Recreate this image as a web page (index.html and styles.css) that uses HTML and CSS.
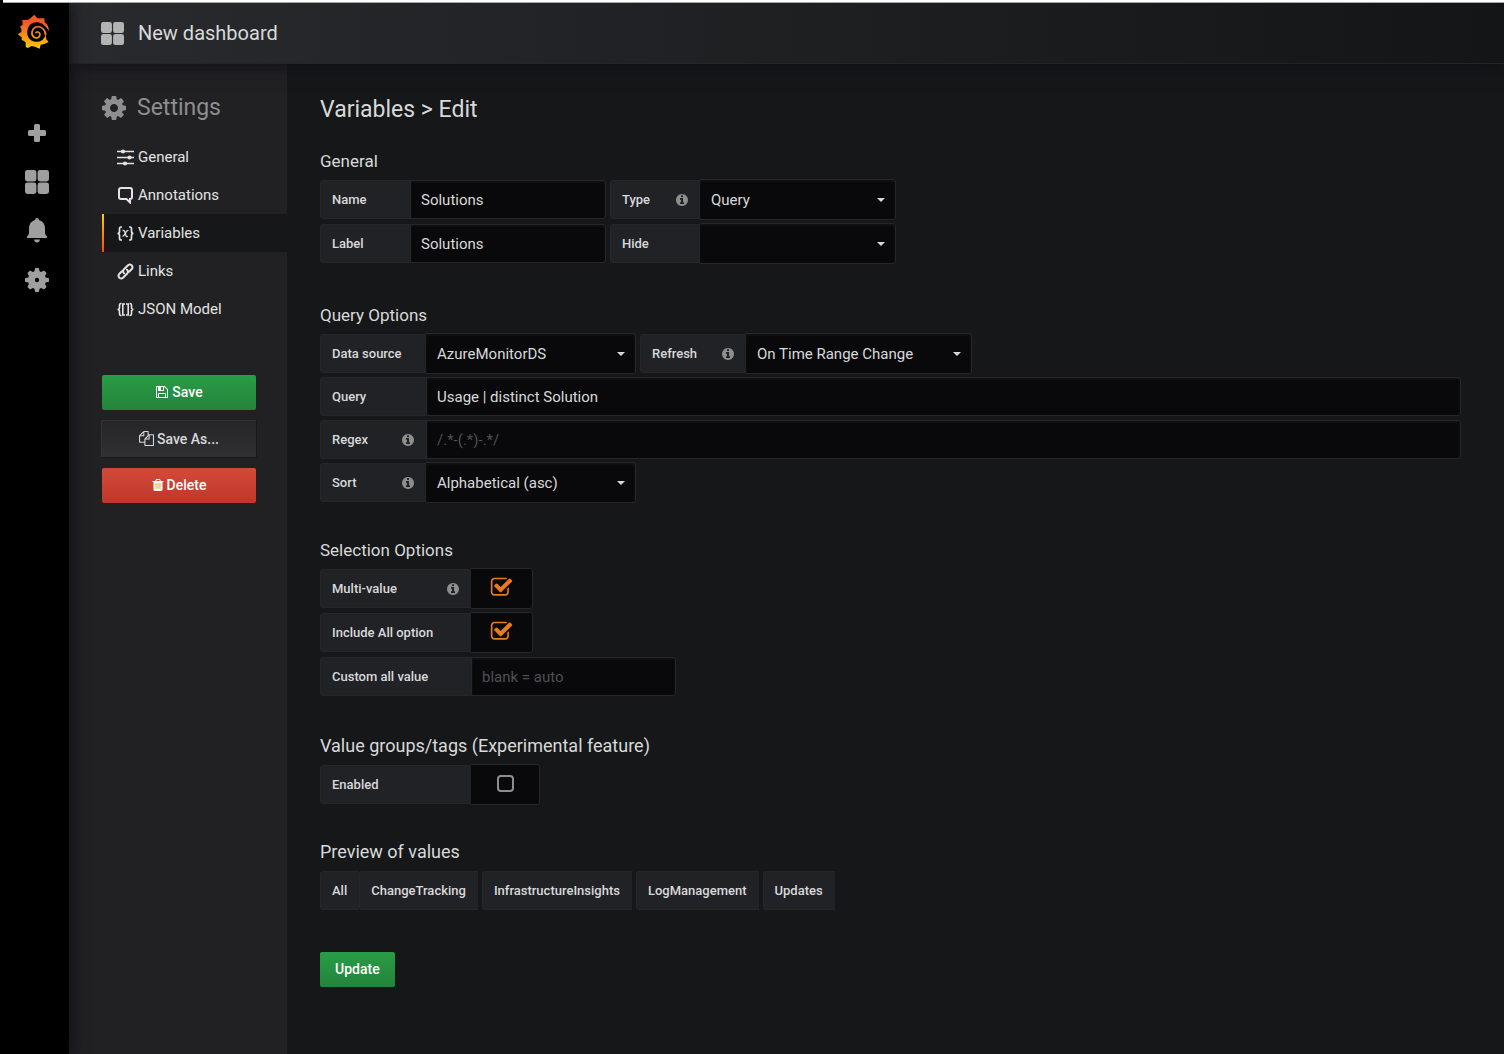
FILE: index.html
```html
<!DOCTYPE html>
<html lang="en">
<head>
<meta charset="utf-8">
<title>New dashboard - Settings</title>
<link rel="stylesheet" href="styles.css">
</head>
<body>
<svg class="defs" aria-hidden="true">
  <defs>
    <linearGradient id="flame" gradientUnits="userSpaceOnUse" x1="0" y1="0" x2="0" y2="104">
      <stop offset="0.25" stop-color="#f05a28"/><stop offset="1" stop-color="#fbca0a"/>
    </linearGradient>
    <symbol id="i-grid" viewBox="0 0 24 24"><rect width="11.4" height="11.4" rx="2.4"/><rect x="12.6" width="11.4" height="11.4" rx="2.4"/><rect y="12.6" width="11.4" height="11.4" rx="2.4"/><rect x="12.6" y="12.6" width="11.4" height="11.4" rx="2.4"/></symbol>
    <symbol id="i-info" viewBox="0 0 1792 1792"><path d="M1152 1376v-160q0-14-9-23t-23-9h-96v-512q0-14-9-23t-23-9h-320q-14 0-23 9t-9 23v160q0 14 9 23t23 9h96v320h-96q-14 0-23 9t-9 23v160q0 14 9 23t23 9h448q14 0 23-9t9-23zm-128-896v-160q0-14-9-23t-23-9h-192q-14 0-23 9t-9 23v160q0 14 9 23t23 9h192q14 0 23-9t9-23zm640 416q0 209-103 385.5t-279.5 279.5-385.5 103-385.5-103-279.5-279.5-103-385.5 103-385.5 279.5-279.5 385.5-103 385.5 103 279.5 279.5 103 385.5z"/></symbol>
    <symbol id="i-check" viewBox="0 0 1792 1792"><path d="M1472 930v318q0 119-84.500 203.500t-203.500 84.500h-832q-119 0-203.500-84.500t-84.500-203.500v-832q0-119 84.500-203.500t203.500-84.500h832q63 0 117 25 15 7 18 23 3 17-9 29l-49 49q-10 10-23 10-3 0-9-2-23-6-45-6h-832q-66 0-113 47t-47 113v832q0 66 47 113t113 47h832q66 0 113-47t47-113v-254q0-13 9-22l64-64q10-10 23-10 6 0 12 3 20 8 20 29zm231-489l-814 814q-24 24-57 24t-57-24l-430-430q-24-24-24-57t24-57l110-110q24-24 57-24t57 24l263 263 647-647q24-24 57-24t57 24l110 110q24 24 24 57t-24 57z"/></symbol>
  </defs>
</svg>
<div class="window-edge"></div>
<div class="app">
  <nav class="rail" aria-label="Main">
    <a class="logo" href="#" aria-label="Home">
      <svg width="34" height="36" viewBox="0 0 102 108"><path fill="url(#flame)" d="M52 2 61 13Q71 13 82 13L83 25Q96 35 96 51Q90 42 84 37Q74 25 60 25Q37 26 32 45Q26 67 42 79Q61 89 77 77Q85 70 85 61L86 62L88 76L95 84L82 90L71 92L68 104L54 98L43 96L33 102L26 99L26 85L14 77L14 70L2 61L13 54L13 44L9 38L17 32L16 18L33 18L41 12Z"/><path d="M86 63C85 44 70 35 57 39C44 44 41 61 50 69C58 75 69 71 69 61C68 52 58 52 56 58" fill="none" stroke="url(#flame)" stroke-width="5"/></svg>
    </a>
    <a class="rail-link" href="#" aria-label="Create"><svg width="18" height="18" viewBox="0 0 18 18"><path d="M7.500 0h3q1.500 0 1.500 1.500V6h4.500Q18 6 18 7.500v3q0 1.500-1.500 1.500H12v4.500q0 1.500-1.500 1.500h-3Q6 18 6 16.500V12H1.500Q0 12 0 10.500v-3Q0 6 1.500 6H6V1.500Q6 0 7.500 0z"/></svg></a>
    <a class="rail-link" href="#" aria-label="Dashboards"><svg width="24" height="24"><use href="#i-grid"/></svg></a>
    <a class="rail-link" href="#" aria-label="Alerting"><svg width="20" height="25" viewBox="0 0 20 25"><path d="M8 2Q8 0 10 0t2 2Q18 3.500 18 11v5l2 2.500v1.500H0v-1.500L2 16v-5Q2 3.500 8 2zM7 21.500h6q-.5 3-3 3t-3-3z"/></svg></a>
    <a class="rail-link" href="#" aria-label="Configuration"><svg width="24" height="24" viewBox="0 0 24 24"><path fill-rule="evenodd" d="M10.200 0h3.600l.8 3.300 1.500.6L19 2.400 21.600 5l-1.500 2.900.6 1.500 3.300.8v3.600l-3.300.8-.6 1.500 1.500 2.900-2.600 2.600-2.900-1.500-1.500.6-.8 3.300h-3.600l-.8-3.300-1.500-.6L5 21.600 2.400 19l1.500-2.900-.6-1.500L0 13.800v-3.600l3.300-.8.600-1.500L2.400 5 5 2.400l2.900 1.500 1.500-.6zM12 9.800a2.200 2.200 0 1 0 0 4.400 2.200 2.200 0 1 0 0-4.400z"/></svg></a>
  </nav>
  <div class="main">
    <header class="topbar">
      <svg width="23" height="23"><use href="#i-grid"/></svg>
      <a class="topbar-title" href="#">New dashboard</a>
    </header>
    <div class="page">
      <aside class="side">
        <h1 class="side-title"><svg width="28" height="28" viewBox="0 0 1792 1792"><path d="M1152 896q0-106-75-181t-181-75-181 75-75 181 75 181 181 75 181-75 75-181zm512-109v222q0 12-8 23t-20 13l-185 28q-19 54-39 91 35 50 107 138 10 12 10 25t-9 23q-27 37-99 108t-94 71q-12 0-26-9l-138-108q-44 23-91 38-16 136-29 186-7 28-36 28h-222q-14 0-24.500-8.500t-11.500-21.500l-28-184q-49-16-90-37l-141 107q-10 9-25 9-14 0-25-11-126-114-165-168-7-10-7-23 0-12 8-23 15-21 51-66.500t54-70.500q-27-50-41-99l-183-27q-13-2-21-12.500t-8-23.500v-222q0-12 8-23t19-13l186-28q14-46 39-92-40-57-107-138-10-12-10-24 0-10 9-23 26-36 98.500-107.500t94.500-71.500q13 0 26 10l138 107q44-23 91-38 16-136 29-186 7-28 36-28h222q14 0 24.500 8.500t11.500 21.500l28 184q49 16 90 37l142-107q9-9 24-9 13 0 25 10 129 119 165 170 7 8 7 22 0 12-8 23-15 21-51 66.500t-54 70.500q26 50 41 98l183 28q13 2 21 12.500t8 23.500z"/></svg>Settings</h1>
        <nav class="menu" aria-label="Settings">
          <a class="menu-link" href="#"><svg width="17" height="17" viewBox="0 0 17 17"><path d="M0 2.500h17M0 8.500h17M0 14.500h17" stroke="currentColor" stroke-width="1.500"/><circle cx="6" cy="2.500" r="2.100"/><circle cx="12.500" cy="8.500" r="2.100"/><circle cx="8" cy="14.500" r="2.100"/></svg>General</a>
          <a class="menu-link" href="#"><svg width="17" height="17" viewBox="0 0 17 17"><path d="M4 1h9q2 0 2 2v7q0 2-2 2v3.500L9.500 12H4q-2 0-2-2V3q0-2 2-2z" fill="none" stroke="currentColor" stroke-width="2"/></svg>Annotations</a>
          <a class="menu-link active" href="#" aria-current="page"><svg class="line" width="17" height="17" viewBox="0 0 17 17" stroke-width="1.700"><path d="M5 2H4Q2.500 2 2.500 4v2.500Q2.500 8.500.5 8.500q2 0 2 2V13q0 2 1.500 2h1M12 2h1q1.500 0 1.500 2v2.500q0 2 2 2-2 0-2 2V13q0 2-1.500 2h-1"/><path d="M5.500 5.500q1.800-.5 2.300 1.200l1.200 4q.6 1.500 2 .6M11.500 5.500Q10 5 8.500 8T5.500 11.300" stroke-width="1.300"/></svg>Variables</a>
          <a class="menu-link" href="#"><svg class="line" width="17" height="17" viewBox="0 0 17 17" stroke-width="2"><path d="M7 10.300Q5.200 8 7 6.200L11 2.200q1.800-1.500 3.700.1 1.600 1.800.1 3.700L12 8.800M10 6.700q1.800 2.300 0 4.100L6 14.800q-1.800 1.500-3.700-.1-1.600-1.800-.1-3.700L5 8.200" stroke-linecap="round"/></svg>Links</a>
          <a class="menu-link" href="#"><svg class="line" width="17" height="17" viewBox="0 0 17 17" stroke-width="1.600"><path d="M4.500 2.500H4Q2.500 2.500 2.500 4.500v2q0 2-2 2 2 0 2 2v2q0 2 1.500 2h.5M12.500 2.500h.5q1.500 0 1.500 2v2q0 2 2 2-2 0-2 2v2q0 2-1.500 2h-.5M8 3H5.800v11H8M9 3h2.200v11H9"/></svg>JSON Model</a>
        </nav>
        <div class="actions">
          <button class="btn green" type="button"><svg width="14" height="14" viewBox="0 0 1792 1792"><path d="M512 1536h768v-384h-768v384zm896 0h128v-896q0-14-10-38.500t-20-34.500l-281-281q-10-10-34-20t-39-10v416q0 40-28 68t-68 28h-576q-40 0-68-28t-28-68v-416h-128v1280h128v-416q0-40 28-68t68-28h832q40 0 68 28t28 68v416zm-384-928v-320q0-13-9.500-22.500t-22.500-9.500h-192q-13 0-22.500 9.500t-9.500 22.500v320q0 13 9.500 22.500t22.500 9.500h192q13 0 22.500-9.500t9.500-22.500zm640 32v928q0 40-28 68t-68 28h-1344q-40 0-68-28t-28-68v-1344q0-40 28-68t68-28h928q40 0 88 20t76 48l280 280q28 28 48 76t20 88z"/></svg>Save</button>
          <button class="btn dark" type="button"><svg width="15" height="15" viewBox="0 0 1792 1792"><path d="M1696 384q40 0 68 28t28 68v1216q0 40-28 68t-68 28h-960q-40 0-68-28t-28-68v-288h-544q-40 0-68-28t-28-68v-672q0-40 20-88t48-76l408-408q28-28 76-48t88-20h416q40 0 68 28t28 68v328q68-40 128-40h416zm-544 213l-299 299h299v-299zm-640-384l-299 299h299v-299zm196 647l316-316v-416h-384v416q0 40-28 68t-68 28h-416v640h512v-256q0-40 20-88t48-76zm956 804v-1152h-384v416q0 40-28 68t-68 28h-416v640h896z"/></svg>Save As...</button>
          <button class="btn red" type="button"><svg width="12" height="14" viewBox="192 0 1408 1792"><path fill="#f2a72e" d="M500 600h800v850h-800z"/><path d="M704 1376v-704q0-14-9-23t-23-9h-64q-14 0-23 9t-9 23v704q0 14 9 23t23 9h64q14 0 23-9t9-23zm256 0v-704q0-14-9-23t-23-9h-64q-14 0-23 9t-9 23v704q0 14 9 23t23 9h64q14 0 23-9t9-23zm256 0v-704q0-14-9-23t-23-9h-64q-14 0-23 9t-9 23v704q0 14 9 23t23 9h64q14 0 23-9t9-23zm-544-992h448l-48-117q-7-9-17-11h-317q-10 2-17 11zm928 32v64q0 14-9 23t-23 9h-96v948q0 83-47 143.500t-113 60.500h-832q-66 0-113-58.500t-47-141.500v-952h-96q-14 0-23-9t-9-23v-64q0-14 9-23t23-9h309l70-167q15-37 54-63t79-26h320q40 0 79 26t54 63l70 167h309q14 0 23 9t9 23z"/></svg>Delete</button>
        </div>
      </aside>
      <main class="content">
        <h2 class="page-title">Variables &gt; Edit</h2>
        <form>
          <section class="group general">
            <h3>General</h3>
            <div class="rows">
              <div class="row">
                <div class="field"><label class="tag w90" for="name">Name</label><input class="text w196" id="name" type="text" value="Solutions"></div>
                <div class="field"><label class="tag w90" for="type">Type<svg class="info"><use href="#i-info"/></svg></label><div class="pick w196"><select id="type"><option>Query</option></select></div></div>
              </div>
              <div class="row">
                <div class="field"><label class="tag w90" for="label">Label</label><input class="text w196" id="label" type="text" value="Solutions"></div>
                <div class="field"><label class="tag w90" for="hide">Hide</label><div class="pick w196"><select id="hide"><option></option></select></div></div>
              </div>
            </div>
          </section>
          <section class="group">
            <h3>Query Options</h3>
            <div class="rows tight">
              <div class="row">
                <div class="field"><label class="tag w106" for="source">Data source</label><div class="pick w210"><select id="source"><option>AzureMonitorDS</option></select></div></div>
                <div class="field"><label class="tag w106" for="refresh">Refresh<svg class="info"><use href="#i-info"/></svg></label><div class="pick w226"><select id="refresh"><option>On Time Range Change</option></select></div></div>
              </div>
              <div class="field"><label class="tag w106" for="query">Query</label><input class="text grow" id="query" type="text" value="Usage | distinct Solution"></div>
              <div class="field"><label class="tag w106" for="regex">Regex<svg class="info"><use href="#i-info"/></svg></label><input class="text grow" id="regex" type="text" placeholder="/.*-(.*)-.*/"></div>
              <div class="field"><label class="tag w106" for="sort">Sort<svg class="info"><use href="#i-info"/></svg></label><div class="pick w210"><select id="sort"><option>Alphabetical (asc)</option></select></div></div>
            </div>
          </section>
          <section class="group selection">
            <h3>Selection Options</h3>
            <div class="rows">
              <div class="field"><label class="tag w151" for="multi">Multi-value<svg class="info"><use href="#i-info"/></svg></label><div class="check w62"><input id="multi" type="checkbox" checked><svg width="23" height="23"><use href="#i-check"/></svg></div></div>
              <div class="field"><label class="tag w151" for="all">Include All option</label><div class="check w62"><input id="all" type="checkbox" checked><svg width="23" height="23"><use href="#i-check"/></svg></div></div>
              <div class="field"><label class="tag w151" for="custom">Custom all value</label><input class="text w205" id="custom" type="text" placeholder="blank = auto"></div>
            </div>
          </section>
          <section class="group">
            <h3 class="large">Value groups/tags (Experimental feature)</h3>
            <div class="field"><label class="tag w151" for="enabled">Enabled</label><div class="check w69"><input id="enabled" type="checkbox"><svg width="23" height="23"><use href="#i-check"/></svg></div></div>
          </section>
          <section class="group preview">
            <h3 class="large">Preview of values</h3>
            <div class="values"><span class="tag first">All</span><span class="tag">ChangeTracking</span><span class="tag">InfrastructureInsights</span><span class="tag">LogManagement</span><span class="tag">Updates</span></div>
          </section>
          <button class="btn green update" type="submit">Update</button>
        </form>
      </main>
    </div>
  </div>
</div>
</body>
</html>
```
FILE: styles.css
```css
* { box-sizing: border-box; }
body {
  margin: 0;
  min-height: 100vh;
  display: flex;
  flex-direction: column;
  background: #000;
  color: #d8d9da;
  font: 15px/20px Roboto, "Liberation Sans", sans-serif;
}
.defs { position: absolute; width: 0; height: 0; }
svg { flex: none; fill: currentColor; }
svg.line { fill: none; stroke: currentColor; }
a { color: inherit; text-decoration: none; }
h1, h2, h3 { margin: 0; font-weight: 400; }

.window-edge {
  position: relative;
  z-index: 3;
  height: 3px;
  margin-left: 3px;
  background: #fff;
  border-bottom: 1px solid #a5a5ab;
}
.app { flex: 1; display: flex; }

.rail {
  position: relative;
  z-index: 2;
  width: 69px;
  padding: 11px 0 0 5px;
  display: flex;
  flex-direction: column;
  align-items: center;
  background: #000;
  color: #9f9f9f;
  box-shadow: 0 0 16px #0b0c0e;
}
.logo { height: 36px; margin: 0 7px 58px 0; }
.rail-link { width: 100%; height: 49px; display: flex; align-items: center; justify-content: center; }

.main { flex: 1; min-width: 0; display: flex; flex-direction: column; background: #161719; }
.topbar {
  position: relative;
  z-index: 1;
  height: 61px;
  padding: 0 32px;
  display: flex;
  align-items: center;
  gap: 14px;
  background: linear-gradient(90deg, #292a2d, #141516);
  border-bottom: 1px solid #252528;
  box-shadow: 0 0 18px #0d0e10;
  color: #b3b3b3;
}
.topbar-title { color: #d8d9da; font-size: 20px; line-height: 24px; }
.page { flex: 1; display: flex; }

.side { width: 218px; padding: 29px 0 0 31px; background: #212124; }
.side-title {
  display: flex;
  align-items: center;
  gap: 9px;
  height: 30px;
  margin-bottom: 15px;
  color: #8e8e8e;
  font-size: 23px;
  line-height: 30px;
}
.menu { display: flex; flex-direction: column; padding-left: 2px; margin-bottom: 47px; }
.menu-link { height: 38px; padding-left: 15px; display: flex; align-items: center; gap: 4px; color: #e3e3e3; }
.menu-link.active {
  padding-left: 13px;
  background: #161719;
  border-left: 2px solid;
  border-image: linear-gradient(#ffd500, #ff4400) 1;
}
.actions { display: flex; flex-direction: column; gap: 10px; padding: 0 31px 0 2px; }

.btn {
  height: 35px;
  padding: 0 0 1px;
  border: 0;
  border-radius: 2px;
  display: flex;
  align-items: center;
  justify-content: center;
  gap: 3px;
  color: #fff;
  font: 500 14px/20px Roboto, "Liberation Sans", sans-serif;
}
.green { background: linear-gradient(#299c46, #23843b); }
.red { background: linear-gradient(#d44a3a, #bf3729); }
.dark {
  height: 38px;
  margin: 0 -1px;
  border: 1px solid #343437;
  border-right-color: #18181a;
  border-bottom-color: #18181a;
  background: linear-gradient(#262628, #303032);
  color: #d8d9da;
}
.update { padding: 0 15px 1px; }

.content { flex: 1; min-width: 0; padding: 32px 43px 40px 33px; }
.page-title { margin-bottom: 25px; font-size: 23px; line-height: 28px; }
.group { margin-bottom: 36px; }
.general { margin-bottom: 40px; }
.selection { margin-bottom: 38px; }
.preview { margin-bottom: 42px; }
h3 { margin-bottom: 7px; font-size: 17px; line-height: 24px; }
h3.large { font-size: 18px; }
.rows { display: flex; flex-direction: column; gap: 5px; }
.tight { gap: 4px; }
.row { display: flex; gap: 4px; }
.field { display: flex; height: 39px; }
.tag {
  flex: none;
  height: 39px;
  padding: 0 12px 0 11px;
  display: flex;
  align-items: center;
  justify-content: space-between;
  background: #212226;
  border: 1px solid #262628;
  border-right: 0;
  border-radius: 3px 0 0 3px;
  font-size: 13px;
  font-weight: 500;
}
.info { width: 14px; height: 14px; color: #8e8e8e; margin-right: -1px; }
.text, .pick, .check { background: #09090b; border: 1px solid #262628; border-radius: 0 3px 3px 0; }
.text {
  min-width: 0;
  padding: 0 10px;
  color: #d8d9da;
  font: inherit;
  box-shadow: inset 0 1px 3px #161719;
}
.text::placeholder { color: #505052; opacity: 1; }
.grow { flex: 1; }
.pick, .check { position: relative; margin: -1px 0; }
.pick { border-left-width: 0; box-shadow: inset 0 1px 3px #161719; }
.pick select {
  appearance: none;
  width: 100%;
  height: 100%;
  padding: 0 30px 0 11px;
  border: 0;
  background: none;
  color: #d8d9da;
  font: inherit;
}
.pick::after {
  content: "";
  position: absolute;
  top: 18px;
  right: 10px;
  border: 4px solid transparent;
  border-top-color: #d8d9da;
  border-bottom: 0;
  pointer-events: none;
}
.check { display: flex; align-items: center; justify-content: center; border-left: 0; padding-bottom: 3px; }
.check input {
  appearance: none;
  width: 17px;
  height: 17px;
  margin: 0;
  border: 2px solid #8e8e8e;
  border-radius: 4px;
}
.check svg { display: none; color: #eb7b18; }
.check input:checked { position: absolute; opacity: 0; }
.check input:checked + svg { display: block; }
.w62 { width: 62px; }
.w69 { width: 69px; }
.w90 { width: 90px; }
.w106 { width: 106px; }
.w151 { width: 151px; }
.w196 { width: 196px; }
.w205 { width: 205px; }
.w210 { width: 210px; }
.w226 { width: 226px; }
.values { display: flex; flex-wrap: wrap; gap: 4px; }
.first { margin-right: -4px; }
```
